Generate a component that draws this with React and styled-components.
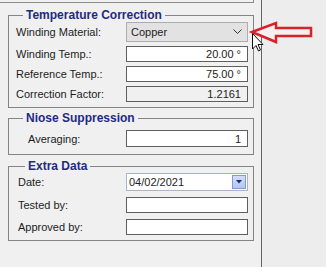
import React from 'react';
import styled, { createGlobalStyle } from 'styled-components';

const GlobalStyle = createGlobalStyle`
  html, body {
    margin: 0;
    padding: 0;
    background: #ededed;
    font-family: "Liberation Sans", Arial, sans-serif;
  }
`;

const Screen = styled.div`
  display: flex;
  width: 326px;
  height: 267px;
  overflow: hidden;
  background: #ededed;
`;

const Panel = styled.div`
  position: relative;
  width: 262px;
  height: 267px;
  background: #f0f0f0;
  border-right: 1px solid #646464;
  display: flex;
  flex-direction: column;
  padding-left: 8px;
  box-sizing: border-box;
`;

const TopBox = styled.div`
  margin-left: -8px;
  width: 253px;
  height: 2px;
  border-bottom: 1px solid #8c8c8c;
  border-right: 1px solid #8c8c8c;
`;

const Group = styled.fieldset`
  margin: ${p => p.top}px 0 0 0;
  padding: ${p => p.padTop || 0}px 5px ${p => p.padBottom}px ${p => p.padLeft}px;
  width: 246px;
  box-sizing: border-box;
  border: 1px solid #848484;
  min-width: 0;
  display: flex;
  flex-direction: column;
  gap: ${p => p.gap}px;
`;

const Legend = styled.legend`
  margin-left: 7px;
  padding: 0 3px;
  font-size: 12px;
  line-height: 14px;
  font-weight: bold;
  color: #1f2a84;
`;

const Row = styled.div`
  display: flex;
  align-items: center;
  height: ${p => p.h}px;
`;

const Label = styled.span`
  flex: 1;
  font-size: 11px;
  color: #1c1c1c;
  padding-left: ${p => p.indent || 0}px;
`;

const Combo = styled.div`
  width: 122px;
  height: 20px;
  box-sizing: border-box;
  background: #e2e2e2;
  border: 1px solid #adadad;
  display: flex;
  align-items: center;
  justify-content: space-between;
  padding: 0 5px 0 4px;
  font-size: 11px;
  color: #1c1c1c;
`;

const Field = styled.div`
  width: 122px;
  height: ${p => p.h || 16}px;
  box-sizing: border-box;
  background: ${p => (p.readOnly ? '#f0f0f0' : '#ffffff')};
  border: 1px solid #5e5e5e;
  display: flex;
  align-items: center;
  justify-content: flex-end;
  padding-right: 6px;
  font-size: 11px;
  color: #1c1c1c;
`;

const DateBox = styled.div`
  width: 122px;
  height: 18px;
  box-sizing: border-box;
  background: #ffffff;
  border: 1px solid #a9b4c8;
  display: flex;
  align-items: center;
  justify-content: space-between;
  padding: 0 1px 0 2px;
  font-size: 11px;
  color: #1c1c1c;
`;

const DropButton = styled.div`
  width: 14px;
  height: 14px;
  box-sizing: border-box;
  background: linear-gradient(#d3def8, #b3c6f2);
  border: 1px solid #7f9bd8;
  display: flex;
  align-items: center;
  justify-content: center;
`;

const Overlay = styled.svg`
  position: absolute;
  left: ${p => p.x}px;
  top: ${p => p.y}px;
  overflow: visible;
`;

const Chevron = () => (
  <svg width="9" height="6" viewBox="0 0 9 6">
    <path d="M0.5 0.5 L4.5 4.5 L8.5 0.5" fill="none" stroke="#333" strokeWidth="1" />
  </svg>
);

export default function App() {
  return (
    <Screen>
      <GlobalStyle />
      <Panel>
        <TopBox />
        <Group top={5} padLeft={7} padBottom={5} gap={4}>
          <Legend>Temperature Correction</Legend>
          <Row h={20}>
            <Label>Winding Material:</Label>
            <Combo>
              <span>Copper</span>
              <Chevron />
            </Combo>
          </Row>
          <Row h={16}>
            <Label>Winding Temp.:</Label>
            <Field>20.00 °</Field>
          </Row>
          <Row h={16}>
            <Label>Reference Temp.:</Label>
            <Field>75.00 °</Field>
          </Row>
          <Row h={16}>
            <Label>Correction Factor:</Label>
            <Field readOnly>1.2161</Field>
          </Row>
        </Group>
        <Group top={3} padTop={5} padLeft={7} padBottom={7} gap={0}>
          <Legend>Niose Suppression</Legend>
          <Row h={17}>
            <Label indent={12}>Averaging:</Label>
            <Field h={17}>1</Field>
          </Row>
        </Group>
        <Group top={4} padLeft={9} padBottom={5} gap={6}>
          <Legend>Extra Data</Legend>
          <Row h={18}>
            <Label>Date:</Label>
            <DateBox>
              <span>04/02/2021</span>
              <DropButton>
                <svg width="6" height="4" viewBox="0 0 6 4">
                  <path d="M0 0 H6 L3 3.5 Z" fill="#1d2a70" />
                </svg>
              </DropButton>
            </DateBox>
          </Row>
          <Row h={16}>
            <Label>Tested by:</Label>
            <Field />
          </Row>
          <Row h={16}>
            <Label>Approved by:</Label>
            <Field />
          </Row>
        </Group>
        <Overlay x={250} y={21} width="64" height="24" viewBox="0 0 64 24">
          <path
            d="M2 11 L26 2 L26 7 L61 7 L61 15 L26 15 L26 21 Z"
            fill="#f4f0f0"
            stroke="#d8222a"
            strokeWidth="2.5"
            strokeLinejoin="miter"
          />
        </Overlay>
        <Overlay x={252} y={33} width="12" height="19" viewBox="0 0 12 19">
          <path
            d="M0.5 0.5 L0.5 16 L4 12.5 L6.5 18 L8.5 17 L6 11.5 L11 11.5 Z"
            fill="#ffffff"
            stroke="#111"
            strokeWidth="1"
          />
        </Overlay>
      </Panel>
    </Screen>
  );
}
